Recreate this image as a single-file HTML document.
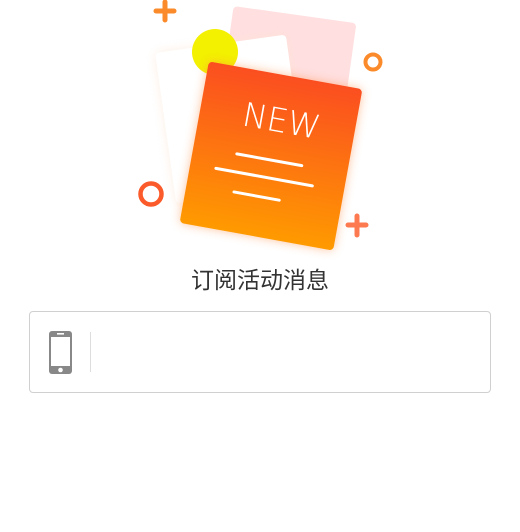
<!DOCTYPE html>
<html><head><meta charset="utf-8"><style>
body{margin:0;width:520px;height:532px;background:#fff;overflow:hidden;position:relative;font-family:"Liberation Sans","Noto Sans CJK SC",sans-serif}
.title{position:absolute;top:261px;left:0;width:520px;text-align:center;font-size:23px;color:#333}
.box{position:absolute;left:29px;top:311px;width:460px;height:80px;border:1px solid #d0d0d0;border-radius:4px}
.div{position:absolute;left:60px;top:20px;width:1px;height:40px;background:#ddd}
</style></head><body>
<svg width="520" height="260" style="position:absolute;left:0;top:0">
<defs>
<linearGradient id="og" x1="0" y1="0" x2="0" y2="1"><stop offset="0" stop-color="#fb4e20"/><stop offset="1" stop-color="#ff9a00"/></linearGradient>
<filter id="sh" x="-30%" y="-30%" width="160%" height="160%"><feGaussianBlur stdDeviation="5"/></filter>
</defs>
<g transform="translate(285,86) rotate(8)"><rect x="-62" y="-72" width="124" height="144" rx="4" fill="#ffdfe0"/></g>
<g transform="translate(231,119) rotate(-8)"><rect x="-66" y="-76" width="132" height="152" rx="4" fill="#fde3d0" filter="url(#sh)" opacity=".6"/><rect x="-66" y="-76" width="132" height="152" rx="4" fill="#fff"/></g>
<circle cx="215" cy="52" r="23" fill="#f3f000"/>
<g transform="translate(271,156) rotate(10.3)">
<rect x="-78" y="-82" width="156" height="164" rx="4" fill="#ff8a40" filter="url(#sh)" opacity=".5"/>
<rect x="-78" y="-82" width="156" height="164" rx="4" fill="url(#og)"/>
<text x="4" y="-25" text-anchor="middle" font-size="33" fill="#fff" font-family="DejaVu Sans" font-weight="200" style="font-weight:200">NEW</text>
<g stroke="#fff" stroke-width="3" stroke-linecap="round"><line x1="-34" y1="4" x2="32" y2="4"/><line x1="-52" y1="22" x2="46" y2="22"/><line x1="-30" y1="42" x2="16" y2="42"/></g>
</g>
<circle cx="373" cy="62" r="7.5" fill="none" stroke="#fb8a2a" stroke-width="4"/>
<circle cx="151" cy="194" r="10.5" fill="none" stroke="#fb5a2a" stroke-width="4.5"/>
<g stroke="#fb8a2a" stroke-width="5" stroke-linecap="round"><line x1="165" y1="2" x2="165" y2="20"/><line x1="156" y1="11" x2="174" y2="11"/></g>
<g stroke="#fd7a50" stroke-width="5" stroke-linecap="round"><line x1="357" y1="216" x2="357" y2="235"/><line x1="348" y1="225" x2="366" y2="225"/></g>
</svg>
<div class="title">订阅活动消息</div>
<div class="box">
<svg width="26" height="46" style="position:absolute;left:18px;top:18px" viewBox="0 0 26 46"><rect x="1" y="1" width="23" height="43" rx="3" fill="#888"/><rect x="3" y="7" width="19" height="29" fill="#fff"/><rect x="9" y="3" width="7" height="1.6" fill="#fff"/><circle cx="12.5" cy="40" r="2.3" fill="#fff"/></svg>
<div class="div"></div>
</div>
</body></html>
